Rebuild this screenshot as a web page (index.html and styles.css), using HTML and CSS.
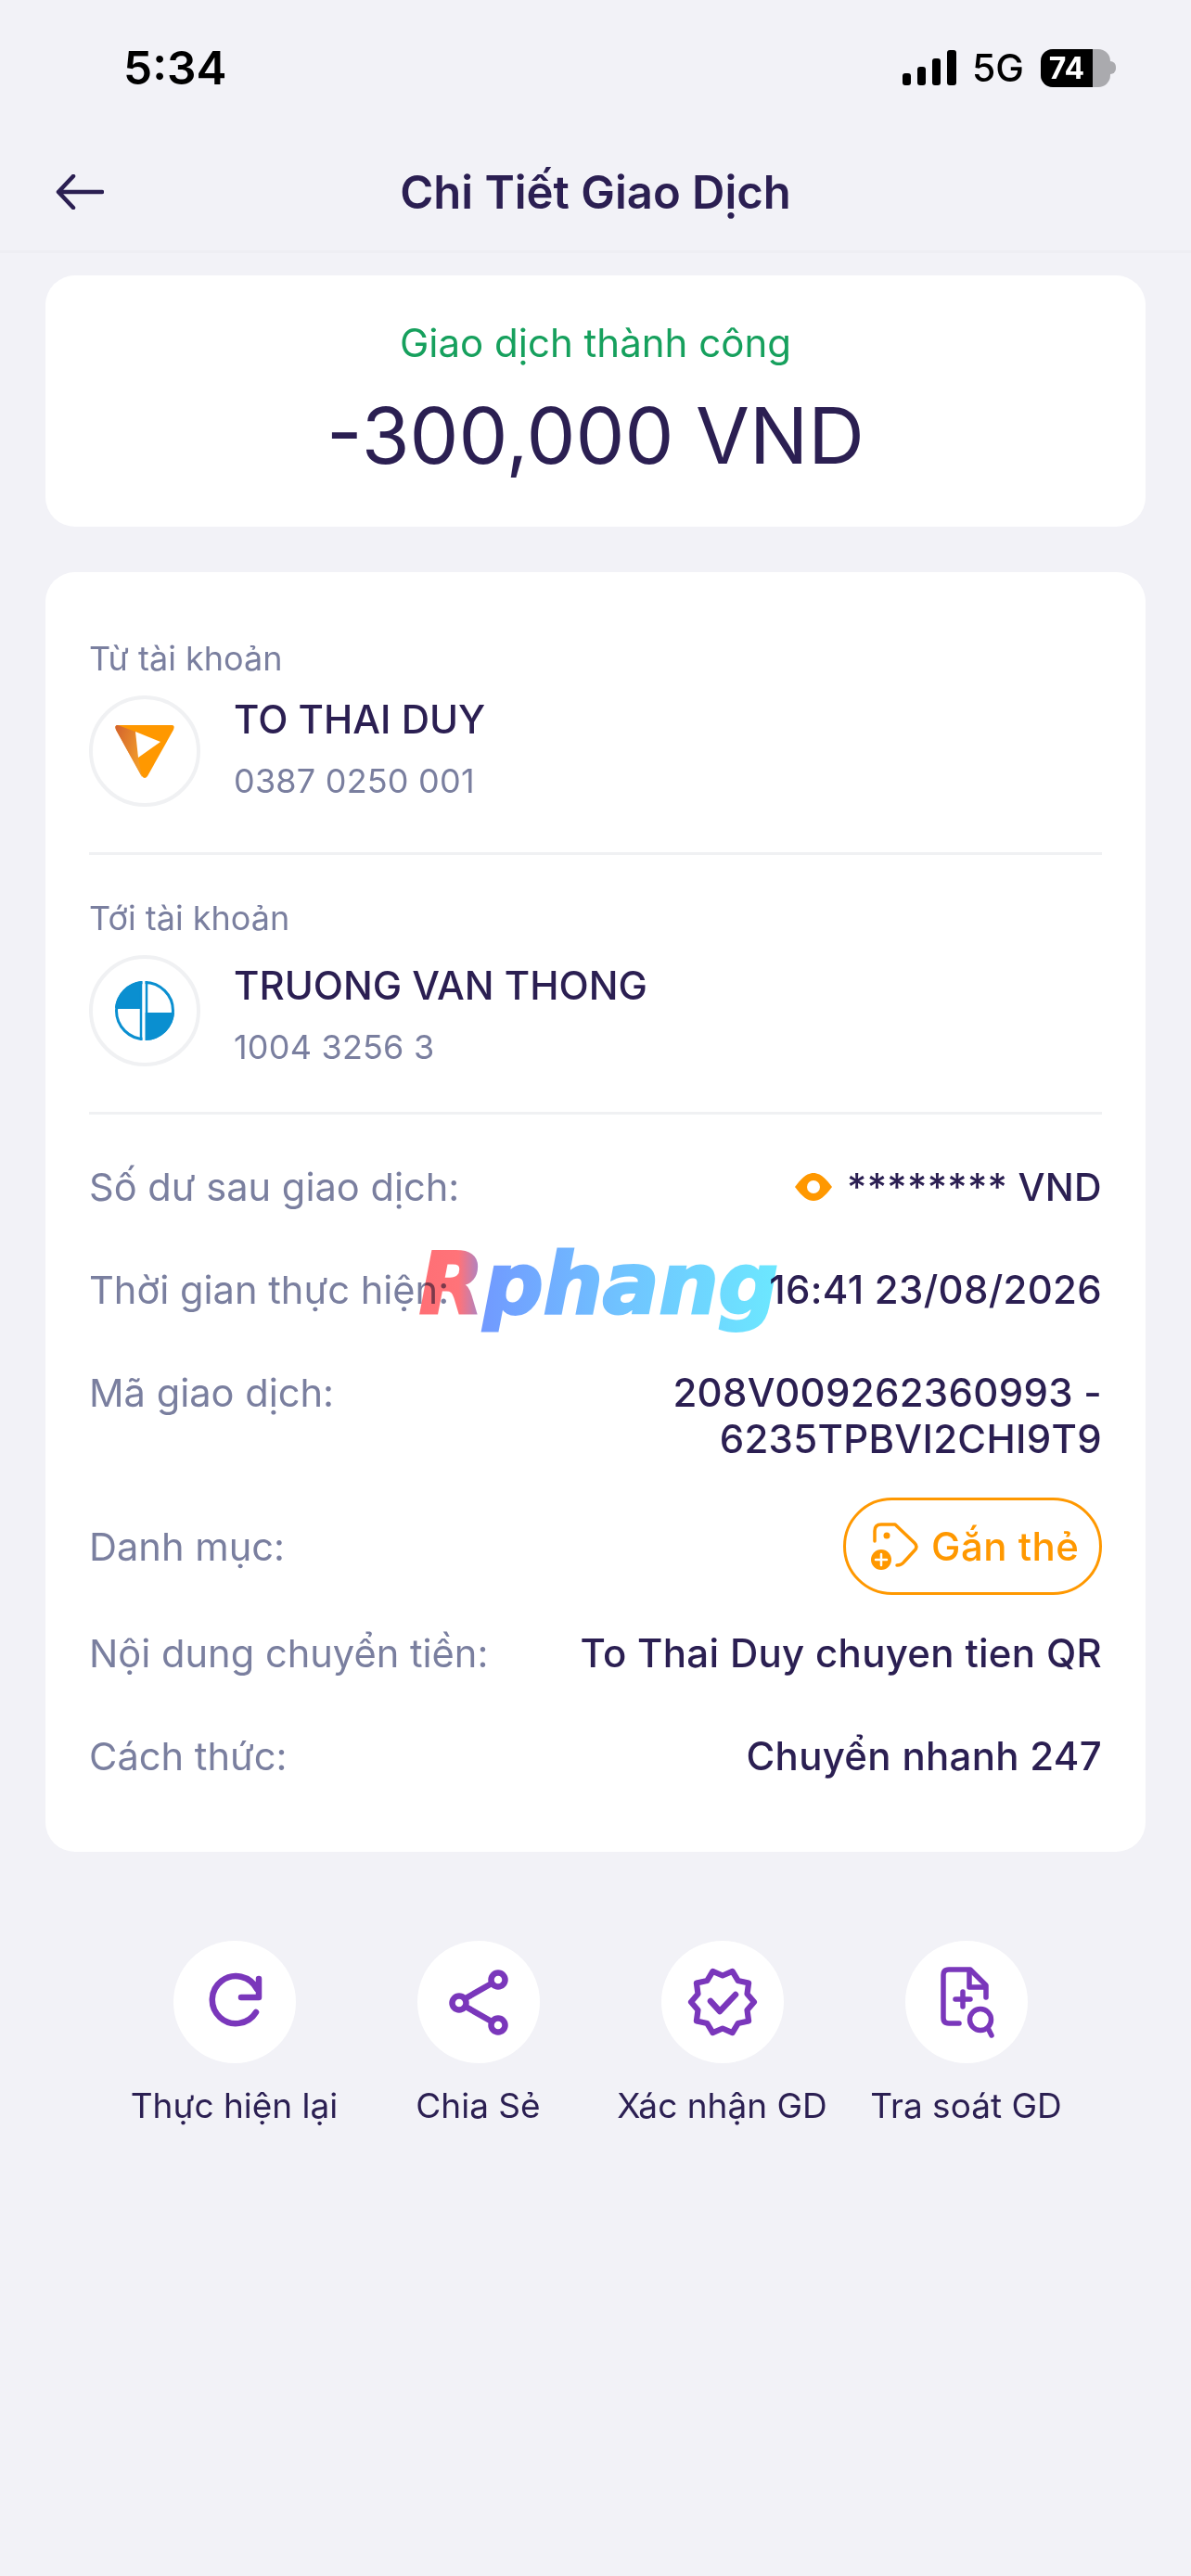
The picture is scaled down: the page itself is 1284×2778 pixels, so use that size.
FILE: index.html
```html
<!DOCTYPE html>
<html lang="vi">
<head>
  <meta charset="UTF-8">
  <title>Chi Tiết Giao Dịch</title>
  <link rel="stylesheet" href="styles.css">
</head>
<body>
  <div class="status-bar">
    <span class="time">5:34</span>
    <div class="status-right">
      <svg class="signal" width="58" height="38" viewBox="0 0 58 38">
        <rect x="0" y="25" width="9" height="13" rx="3"/>
        <rect x="16" y="18" width="9" height="20" rx="3"/>
        <rect x="32" y="9" width="9" height="29" rx="3"/>
        <rect x="48" y="0" width="10" height="38" rx="3"/>
      </svg>
      <span class="network">5G</span>
      <div class="battery">
        <div class="battery-body"><span class="battery-fill">74</span></div>
        <div class="battery-cap"></div>
      </div>
    </div>
  </div>

  <header class="nav">
    <svg class="back" width="52" height="38" viewBox="0 0 52 38">
      <path d="M19 2 L3 19 L19 36 M3 19 H50" fill="none" stroke="#2b1f52" stroke-width="4.5" stroke-linecap="round" stroke-linejoin="round"/>
    </svg>
    <h1>Chi Tiết Giao Dịch</h1>
  </header>

  <main>
    <section class="card summary">
      <div class="status-text">Giao dịch thành công</div>
      <div class="amount">-300,000 VND</div>
    </section>

    <section class="card details">
      <div class="account">
        <div class="label">Từ tài khoản</div>
        <div class="account-row">
          <div class="logo">
            <svg width="120" height="120" viewBox="0 0 120 120">
              <defs>
                <linearGradient id="tpLeft" x1="0" y1="0" x2="1" y2="0.5">
                  <stop offset="0" stop-color="#d2622e"/>
                  <stop offset="1" stop-color="#f19a2a"/>
                </linearGradient>
              </defs>
              <path d="M31 32 H89 Q93 32 91 37 L63 87 Q60 91 57 87 L29 37 Q27 32 31 32 Z" fill="#ff9800"/>
              <path d="M31 32 L50 39 L53 67 L57 88 L29 37 Q27 32 31 32 Z" fill="url(#tpLeft)"/>
              <path d="M50 39 L77 50 L53 67 Z" fill="#fff"/>
            </svg>
          </div>
          <div class="account-text">
            <div class="account-name">TO THAI DUY</div>
            <div class="account-number">0387 0250 001</div>
          </div>
        </div>
      </div>

      <div class="account">
        <div class="label">Tới tài khoản</div>
        <div class="account-row">
          <div class="logo">
            <svg width="120" height="120" viewBox="0 0 120 120">
              <circle cx="60" cy="60" r="30.5" fill="#fff" stroke="#0a8fd0" stroke-width="3"/>
              <path d="M56 28 A32 32 0 0 0 28 56 Q28 58 32 58 H56 Z" fill="#0a8fd0"/>
              <path d="M59 92 V62 H92 A32 32 0 0 1 62 92 Z" fill="#0a8fd0"/>
              <path d="M59 28 V92" stroke="#fff" stroke-width="3" fill="none"/>
              <path d="M56 28 V92" stroke="#0a8fd0" stroke-width="2.5" fill="none"/>
              <path d="M62 28 V62" stroke="#0a8fd0" stroke-width="2.5" fill="none"/>
            </svg>
          </div>
          <div class="account-text">
            <div class="account-name">TRUONG VAN THONG</div>
            <div class="account-number">1004 3256 3</div>
          </div>
        </div>
      </div>

      <div class="rows">
        <div class="row">
          <span class="row-label">Số dư sau giao dịch:</span>
          <span class="row-value balance">
            <svg width="40" height="30" viewBox="0 0 40 30">
              <path d="M0 15 C8 4 14 0 20 0 C26 0 32 4 40 15 C32 26 26 30 20 30 C14 30 8 26 0 15 Z" fill="#ff9800"/>
              <circle cx="20" cy="15" r="7" fill="#fff"/>
            </svg>
            ******** VND
          </span>
        </div>
        <div class="row">
          <span class="row-label">Thời gian thực hiện:</span>
          <span class="row-value">16:41 23/08/2026</span>
        </div>
        <div class="row">
          <span class="row-label">Mã giao dịch:</span>
          <span class="row-value">208V009262360993 -<br>6235TPBVI2CHI9T9</span>
        </div>
        <div class="row row-tag">
          <span class="row-label">Danh mục:</span>
          <button class="tag-btn">
            <svg width="52" height="52" viewBox="0 0 52 52">
              <path d="M4 20 V9 Q4 2 11 2 H26 L47 22 Q51 26 47 30 L36 42 Q33 46 28 46" fill="none" stroke="#ff9800" stroke-width="3.5" stroke-linecap="round" stroke-linejoin="round"/>
              <circle cx="17" cy="14" r="3.5" fill="#ff9800"/>
              <circle cx="11" cy="40" r="11" fill="#ff9800"/>
              <path d="M5 40 H17 M11 34 V46" stroke="#fff" stroke-width="2.5" stroke-linecap="round"/>
            </svg>
            Gắn thẻ
          </button>
        </div>
        <div class="row">
          <span class="row-label">Nội dung chuyển tiền:</span>
          <span class="row-value">To Thai Duy chuyen tien QR</span>
        </div>
        <div class="row">
          <span class="row-label">Cách thức:</span>
          <span class="row-value">Chuyển nhanh 247</span>
        </div>
      </div>
    </section>

    <div class="actions">
      <div class="action">
        <div class="action-icon">
          <svg width="132" height="132" viewBox="0 0 132 132">
            <path d="M89 77 A25.5 25.5 0 1 1 90 52 M92 41 V61 H73" fill="none" stroke="#7a37bb" stroke-width="6.5" stroke-linecap="round" stroke-linejoin="round"/>
          </svg>
        </div>
        <span>Thực hiện lại</span>
      </div>
      <div class="action">
        <div class="action-icon">
          <svg width="132" height="132" viewBox="0 0 132 132">
            <g fill="none" stroke="#7a37bb" stroke-width="6.5">
              <circle cx="87" cy="42" r="7.5"/>
              <circle cx="45" cy="67" r="7.5"/>
              <circle cx="87" cy="91" r="7.5"/>
              <path d="M52 62 L80 46 M52 71 L80 87"/>
            </g>
          </svg>
        </div>
        <span>Chia Sẻ</span>
      </div>
      <div class="action">
        <div class="action-icon">
          <svg width="132" height="132" viewBox="0 0 132 132">
            <g fill="none" stroke="#7a37bb" stroke-linecap="round" stroke-linejoin="round">
              <path stroke-width="6.2" d="M100 66 L92.500 57.300 L94.100 45.500 L82.600 42.900 L76.600 32.900 L66 37.500 L55.400 32.900 L49.400 42.900 L37.900 45.500 L39.500 57.300 L32 66 L39.500 74.700 L37.900 86.500 L49.400 89.100 L55.400 99.100 L66 94.500 L76.600 99.100 L82.600 89.100 L94.100 86.500 L92.500 74.700 Z"/>
              <path stroke-width="6.500" d="M53 65 L63 76 L80 58"/>
            </g>
          </svg>
        </div>
        <span>Xác nhận GD</span>
      </div>
      <div class="action">
        <div class="action-icon">
          <svg width="132" height="132" viewBox="0 0 132 132">
            <g fill="none" stroke="#7a37bb" stroke-width="5.5" stroke-linecap="round" stroke-linejoin="round">
              <path d="M58 89 H47 Q41 89 41 83 V37 Q41 31 47 31 H70 L87 48 V61"/>
              <path d="M69 32 V50 H86"/>
              <path d="M54 63 H70 M62 55 V71"/>
              <circle cx="81" cy="85" r="11.500"/>
              <path d="M89 94 L93 102"/>
            </g>
          </svg>
        </div>
        <span>Tra soát GD</span>
      </div>
    </div>
  </main>

  <div class="watermark">Rphang</div>
</body>
</html>
```

FILE: styles.css
```css
* {
  box-sizing: border-box;
}

body {
  margin: 0;
  width: 1284px;
  height: 2778px;
  position: relative;
  overflow: hidden;
  background: #f2f2f7;
  color: #2b1f52;
  font-family: Inter, "Noto Sans", sans-serif;
}

.status-bar {
  height: 135px;
  padding: 50px 81px 0 133px;
  display: flex;
  justify-content: space-between;
  align-items: flex-start;
  color: #000;
}

.time {
  font-size: 49.5px;
  line-height: 46px;
  font-weight: 600;
}

.status-right {
  display: flex;
  align-items: center;
  height: 46px;
  gap: 17px;
}

.network {
  font-size: 41px;
  font-weight: 500;
}

.battery {
  display: flex;
  align-items: center;
  margin-left: 1px;
}

.battery-body {
  width: 75px;
  height: 41px;
  border-radius: 13px;
  background: #aaaaae;
  overflow: hidden;
}

.battery-fill {
  display: block;
  width: 56px;
  height: 41px;
  line-height: 41px;
  background: #000;
  color: #fff;
  font-size: 32px;
  font-weight: 700;
  text-align: center;
}

.battery-cap {
  width: 6px;
  height: 14px;
  background: #aaaaae;
  border-radius: 0 7px 7px 0;
}

.nav {
  height: 138px;
  position: relative;
  display: flex;
  align-items: center;
  justify-content: center;
  padding-top: 10px;
  border-bottom: 3px solid #eeeef3;
}

.back {
  position: absolute;
  left: 60px;
  top: 53px;
}

.nav h1 {
  margin: 0;
  font-size: 49px;
  font-weight: 600;
  line-height: 60px;
}

main {
  padding: 24px 49px 0;
}

.card {
  background: #fff;
  border-radius: 32px;
}

.summary {
  height: 271px;
  padding-top: 46px;
  text-align: center;
}

.status-text {
  font-size: 42px;
  line-height: 54px;
  color: #16a05d;
}

.amount {
  font-size: 84px;
  line-height: 100px;
  margin-top: 23px;
}

.details {
  height: 1380px;
  margin-top: 49px;
  padding: 0 47px;
}

.account {
  height: 305px;
  padding-top: 69px;
  border-bottom: 3px solid #f0f1f3;
}

.account:nth-child(2) {
  height: 280px;
  padding-top: 44px;
}

.account:nth-child(2) .account-text {
  padding-top: 7px;
}

.label {
  font-size: 36px;
  line-height: 48px;
  color: #7a7f9f;
}

.account-row {
  display: flex;
  gap: 36px;
  margin-top: 16px;
}

.logo {
  width: 120px;
  height: 120px;
  border: 4px solid #f0f1f3;
  border-radius: 50%;
  position: relative;
  flex: none;
}

.logo svg {
  position: absolute;
  left: -4px;
  top: -4px;
}

.account-name {
  font-size: 42px;
  line-height: 50px;
  font-weight: 500;
  margin-top: 1px;
}

.account-number {
  font-size: 36px;
  line-height: 50px;
  letter-spacing: 0.2px;
  margin-top: 16px;
  color: #7a7f9f;
}

.rows {
  padding-top: 53px;
  display: flex;
  flex-direction: column;
  gap: 61px;
}

.row {
  display: flex;
  justify-content: space-between;
  align-items: flex-start;
  font-size: 41.6px;
  line-height: 50px;
}

.row-label {
  color: #7a7f9f;
}

.row-value {
  font-size: 42px;
  font-weight: 500;
  letter-spacing: 0.3px;
  text-align: right;
}

.balance {
  display: flex;
  align-items: center;
  gap: 16px;
  font-size: 41px;
}

.row-tag {
  align-items: center;
  margin: -23px 0;
}

.tag-btn {
  width: 279px;
  height: 105px;
  padding: 0 0 0 27px;
  display: flex;
  align-items: center;
  gap: 13px;
  background: #fff;
  border: 3px solid #ff9800;
  border-radius: 53px;
  color: #ff9800;
  font-family: inherit;
  font-size: 42px;
  letter-spacing: 0.5px;
  font-weight: 500;
}

.actions {
  display: grid;
  grid-template-columns: repeat(4, 263px);
  justify-content: center;
  padding-left: 10px;
  margin-top: 96px;
}

.action {
  display: flex;
  flex-direction: column;
  align-items: center;
  gap: 23px;
  font-size: 37px;
  line-height: 46px;
  white-space: nowrap;
}

.action-icon {
  width: 132px;
  height: 132px;
  border-radius: 50%;
  background: #fff;
}

.watermark {
  position: absolute;
  left: 452px;
  top: 1320px;
  font-family: "DejaVu Sans", sans-serif;
  font-size: 90px;
  line-height: 130px;
  font-weight: 700;
  font-style: italic;
  color: transparent;
  -webkit-text-stroke: 3px transparent;
  background: linear-gradient(90deg, #ff6f75 0%, #ff7379 11%, #b083c0 16.5%, #7199ff 17%, #70c2ff 55%, #6ce8ff 100%);
  -webkit-background-clip: text;
  background-clip: text;
  mix-blend-mode: multiply;
}
```
